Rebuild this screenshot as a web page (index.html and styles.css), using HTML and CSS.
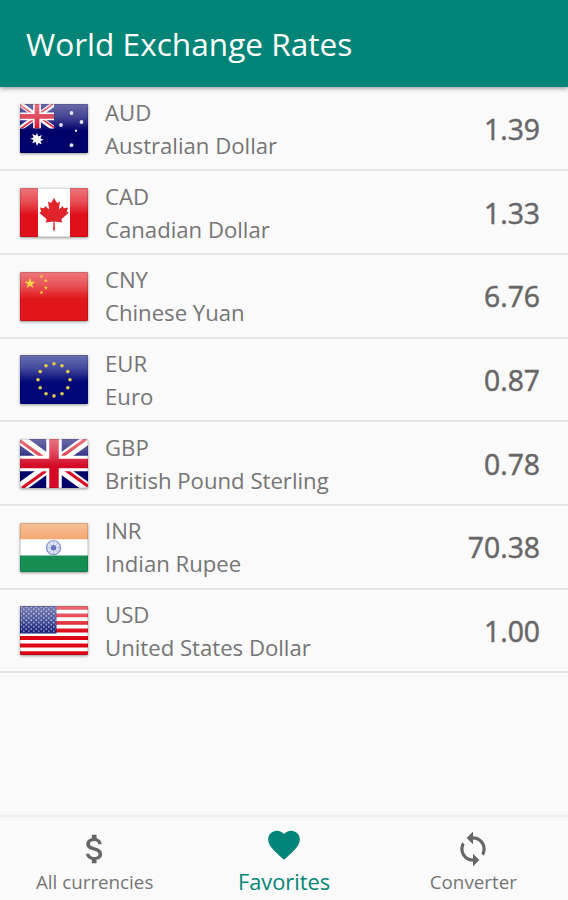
FILE: index.html
```html
<!DOCTYPE html>
<html lang="en">
<head>
    <meta charset="UTF-8">
    <meta name="viewport" content="width=device-width, initial-scale=1.0">
    <title>World Exchange Rates</title>
    <link rel="stylesheet" href="styles.css">
</head>
<body>
    <!-- shared flag parts -->
    <svg class="defs" width="0" height="0">
        <defs>
            <linearGradient id="gloss" x1="0" y1="0" x2="0" y2="1">
                <stop offset="0" stop-color="#fff" stop-opacity=".42"/>
                <stop offset=".5" stop-color="#fff" stop-opacity=".26"/>
                <stop offset="1" stop-color="#fff" stop-opacity="0"/>
            </linearGradient>
            <pattern id="stars" width="5" height="4.4" patternUnits="userSpaceOnUse">
                <circle cx="1.3" cy="1.1" r=".9" fill="#fff"/>
                <circle cx="3.8" cy="3.3" r=".9" fill="#fff"/>
            </pattern>
            <clipPath id="jackClip"><path d="M0 0h68v49H0z"/></clipPath>
            <g id="shine">
                <path d="M0 0h68v27H0z" fill="url(#gloss)"/>
                <path d="M.5 .5h67v48H.5z" fill="none" stroke="#000" stroke-opacity=".13"/>
            </g>
            <g id="jack" clip-path="url(#jackClip)">
                <path d="M0 0h68v49H0z" fill="#00006b"/>
                <path d="M0 0l68 49M68 0L0 49" stroke="#fff" stroke-width="10"/>
                <path d="M0 1.8L34 26.3M68 47.2L34 22.7M66 0L34 23M2 49L34 26" stroke="#dc1024" stroke-width="3.2"/>
                <path d="M34 0v49M0 24.5h68" stroke="#fff" stroke-width="15.5"/>
                <path d="M34 0v49M0 24.5h68" stroke="#d40a26" stroke-width="9.5"/>
            </g>
            <path id="star" d="M0-5L1.2-1.6 4.8-1.5 1.9.6 2.9 4 0 2-2.9 4-1.9.6-4.8-1.5-1.2-1.6z"/>
        </defs>
    </svg>

    <header class="app-bar">
        <h1 class="app-title">World Exchange Rates</h1>
    </header>

    <main class="rates">
        <div class="rate">
            <svg class="flag" viewBox="0 0 68 49">
                <path d="M0 0h68v49H0z" fill="#00006b"/>
                <use href="#jack" transform="scale(.5)"/>
                <use href="#shine"/>
                <path d="M17 29l1.3 3.4 3.5-1.4-1.4 3.4 3.4 1.3-3.4 1.2 1.4 3.4-3.5-1.3L17 42l-1.3-4-3.5 1.3 1.4-3.4-3.4-1.2 3.4-1.3-1.4-3.4 3.5 1.4z" fill="#fff"/>
                <g fill="#dfe2f5">
                    <circle cx="51.5" cy="9" r="1.9"/>
                    <circle cx="41" cy="21" r="1.9"/>
                    <circle cx="61.5" cy="18" r="1.9"/>
                    <circle cx="56" cy="26.7" r="1.2"/>
                    <circle cx="51.5" cy="41.2" r="1.9"/>
                </g>
            </svg>
            <div class="currency">
                <span class="code">AUD</span>
                <span class="name">Australian Dollar</span>
            </div>
            <span class="value">1.39</span>
        </div>
        <div class="rate">
            <svg class="flag" viewBox="0 0 68 49">
                <path d="M0 0h68v49H0z" fill="#fff"/>
                <path d="M0 0h18v49H0zM50 0h18v49H50z" fill="#e0101a"/>
                <use href="#shine"/>
                <path d="M34 10l3 5 3-1.4-1.2 8 4-3.6.9 2.2 4.4-.6-1.4 4 2 1.2-7.3 6.4.8 3.4-7.6-1.2.3 9h-1.8l.3-9-7.6 1.2.8-3.4-7.3-6.4 2-1.2-1.4-4 4.4.6.9-2.2 4 3.6-1.2-8 3 1.4z" fill="#e0242a"/>
            </svg>
            <div class="currency">
                <span class="code">CAD</span>
                <span class="name">Canadian Dollar</span>
            </div>
            <span class="value">1.33</span>
        </div>
        <div class="rate">
            <svg class="flag" viewBox="0 0 68 49">
                <path d="M0 0h68v49H0z" fill="#e0161a"/>
                <use href="#shine"/>
                <g fill="#fbd843">
                    <use href="#star" transform="translate(10 11.5) scale(1.15)"/>
                    <use href="#star" transform="translate(21.5 4.5) scale(.42)"/>
                    <use href="#star" transform="translate(25.8 8.6) scale(.42)"/>
                    <use href="#star" transform="translate(25.8 16) scale(.42)"/>
                    <use href="#star" transform="translate(21.5 20.5) scale(.42)"/>
                </g>
            </svg>
            <div class="currency">
                <span class="code">CNY</span>
                <span class="name">Chinese Yuan</span>
            </div>
            <span class="value">6.76</span>
        </div>
        <div class="rate">
            <svg class="flag" viewBox="0 0 68 49">
                <path d="M0 0h68v49H0z" fill="#000878"/>
                <use href="#shine"/>
                <g fill="#e0ca4c">
                    <circle cx="34" cy="8.7" r="1.8"/>
                    <circle cx="42" cy="10.8" r="1.8"/>
                    <circle cx="47.8" cy="16.6" r="1.8"/>
                    <circle cx="50" cy="24.7" r="1.8"/>
                    <circle cx="47.8" cy="32.8" r="1.8"/>
                    <circle cx="42" cy="38.7" r="1.8"/>
                    <circle cx="34" cy="40.9" r="1.8"/>
                    <circle cx="26" cy="38.7" r="1.8"/>
                    <circle cx="20.2" cy="32.8" r="1.8"/>
                    <circle cx="18" cy="24.7" r="1.8"/>
                    <circle cx="20.2" cy="16.6" r="1.8"/>
                    <circle cx="26" cy="10.8" r="1.8"/>
                </g>
            </svg>
            <div class="currency">
                <span class="code">EUR</span>
                <span class="name">Euro</span>
            </div>
            <span class="value">0.87</span>
        </div>
        <div class="rate">
            <svg class="flag" viewBox="0 0 68 49">
                <use href="#jack"/>
                <use href="#shine"/>
            </svg>
            <div class="currency">
                <span class="code">GBP</span>
                <span class="name">British Pound Sterling</span>
            </div>
            <span class="value">0.78</span>
        </div>
        <div class="rate">
            <svg class="flag" viewBox="0 0 68 49">
                <path d="M0 0h68v49H0z" fill="#fff"/>
                <path d="M0 0h68v16.3H0z" fill="#f0914a"/>
                <path d="M0 32.5h68V49H0z" fill="#168d55"/>
                <circle cx="33.5" cy="24.7" r="7" fill="#dfe3f3" stroke="#7f8fc8" stroke-width="1.3"/>
                <path d="M33.5 18v13.4M26.8 24.7h13.4M28.8 20l9.4 9.4M38.2 20l-9.4 9.4" stroke="#a3aedb" stroke-width=".7"/>
                <circle cx="33.5" cy="24.7" r="2.6" fill="#5d70b8"/>
                <use href="#shine"/>
            </svg>
            <div class="currency">
                <span class="code">INR</span>
                <span class="name">Indian Rupee</span>
            </div>
            <span class="value">70.38</span>
        </div>
        <div class="rate">
            <svg class="flag" viewBox="0 0 68 49">
                <path d="M0 0h68v49H0z" fill="#fff"/>
                <path d="M0 1.9h68M0 9.4h68M0 16.9h68M0 24.5h68M0 32h68M0 39.5h68M0 47.1h68" stroke="#de0614" stroke-width="3.77"/>
                <path d="M0 0h36.5v27.6H0z" fill="#0e1a78"/>
                <path d="M1 1h35v26H1z" fill="url(#stars)" opacity=".6"/>
                <use href="#shine"/>
            </svg>
            <div class="currency">
                <span class="code">USD</span>
                <span class="name">United States Dollar</span>
            </div>
            <span class="value">1.00</span>
        </div>
    </main>

    <nav class="bottom-nav">
        <a class="nav-item">
            <svg class="nav-icon" viewBox="0 0 24 24"><path d="M11.8 10.9c-2.27-.59-3-1.2-3-2.15 0-1.09 1.01-1.85 2.7-1.85 1.78 0 2.44.85 2.5 2.1h2.21c-.07-1.72-1.12-3.3-3.21-3.81V3h-3v2.16c-1.94.42-3.5 1.68-3.5 3.61 0 2.31 1.91 3.46 4.7 4.13 2.5.6 3 1.48 3 2.41 0 .69-.49 1.79-2.7 1.79-2.06 0-2.87-.92-2.98-2.1h-2.2c.12 2.19 1.76 3.42 3.68 3.83V21h3v-2.15c1.95-.37 3.5-1.5 3.5-3.55 0-2.84-2.43-3.81-4.7-4.4z"/></svg>
            <span class="nav-label">All currencies</span>
        </a>
        <a class="nav-item active">
            <svg class="nav-icon" viewBox="0 0 24 24"><path d="M12 21.35l-1.45-1.32C5.4 15.36 2 12.28 2 8.5 2 5.42 4.42 3 7.5 3c1.74 0 3.41.81 4.5 2.09C13.09 3.81 14.76 3 16.5 3 19.58 3 22 5.42 22 8.5c0 3.78-3.4 6.86-8.55 11.54L12 21.35z"/></svg>
            <span class="nav-label">Favorites</span>
        </a>
        <a class="nav-item">
            <svg class="nav-icon" viewBox="0 0 24 24"><path d="M12 4V1L8 5l4 4V6c3.31 0 6 2.69 6 6 0 1.01-.25 1.97-.7 2.8l1.46 1.46C19.54 15.03 20 13.57 20 12c0-4.42-3.58-8-8-8zm0 14c-3.31 0-6-2.69-6-6 0-1.01.25-1.97.7-2.8L5.24 7.74C4.46 8.97 4 10.43 4 12c0 4.42 3.58 8 8 8v3l4-4-4-4v3z"/></svg>
            <span class="nav-label">Converter</span>
        </a>
    </nav>
</body>
</html>
```
FILE: styles.css
```css
* {
    box-sizing: border-box;
}

body {
    font-family: "Open Sans", sans-serif;
    margin: 0;
    height: 900px;
    display: flex;
    flex-direction: column;
    background-color: #fafafa;
    color: #757575;
    overflow: hidden;
}

.defs {
    position: absolute;
}

.app-bar {
    height: 87px;
    flex: none;
    padding: 0 26px;
    display: flex;
    align-items: center;
    background-color: #028576;
    box-shadow: 0 1px 5px rgba(0, 0, 0, 0.45);
}

.app-title {
    margin: 0;
    font-size: 31.6px;
    font-weight: 400;
    color: #fff;
}

.rates {
    flex: 1;
    padding-top: 0.6px;
}

.rate {
    height: 83.67px;
    padding: 1px 28px 0 20px;
    display: flex;
    align-items: center;
    border-bottom: 2px solid #e5e5e5;
}

.flag {
    width: 68px;
    height: 49px;
    flex: none;
    border-radius: 1px;
    box-shadow: 0 1px 3px rgba(0, 0, 0, 0.4);
}

.currency {
    margin-left: 17px;
    flex: 1;
    display: flex;
    flex-direction: column;
    font-size: 22.15px;
    line-height: 33px;
}

.value {
    font-size: 28.3px;
    color: #666;
    -webkit-text-stroke: 0.5px #666;
}

.bottom-nav {
    height: 85px;
    flex: none;
    display: grid;
    grid-template-columns: repeat(3, 1fr);
    border-top: 2px solid #efefef;
}

.nav-item {
    padding-top: 13px;
    display: flex;
    flex-direction: column;
    align-items: center;
}

.nav-icon {
    width: 38px;
    height: 38px;
    fill: #666;
}

.nav-label {
    font-size: 18.8px;
    line-height: 29px;
}

.active {
    padding-top: 9px;
    color: #028576;
}

.active .nav-icon {
    fill: #028576;
}

.active .nav-label {
    font-size: 21.8px;
    line-height: 35px;
}
```
